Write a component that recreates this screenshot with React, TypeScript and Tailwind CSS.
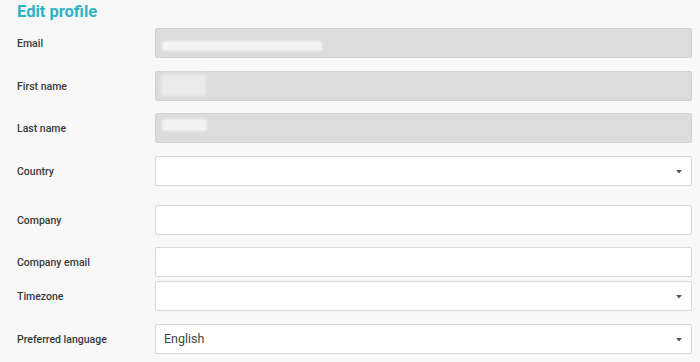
import React from "react";

const font = { fontFamily: "Roboto, 'Liberation Sans', sans-serif" };

function Caret() {
  return (
    <svg width="6" height="4" viewBox="0 0 6 4" className="absolute right-[9px] top-[13px]">
      <path d="M0 0 L6 0 L3 3.5 Z" fill="#555" />
    </svg>
  );
}

function Row({
  label,
  mt,
  kind,
  value,
  blur,
}: {
  label: string;
  mt: string;
  kind: "disabled" | "input" | "select";
  value?: string;
  blur?: React.ReactNode;
}) {
  return (
    <div className={`flex items-center ${mt}`}>
      <div className="w-[138px] pt-[1px] text-[10.5px] font-medium text-[#3a3a3a]">{label}</div>
      <div
        className={
          kind === "disabled"
            ? "relative flex-1 h-[30px] rounded-[2px] border border-[#d2d2d2] bg-[#dcdcdc]"
            : "relative flex-1 h-[30px] rounded-[2px] border border-[#d8d8d8] bg-white"
        }
      >
        {blur}
        {value && (
          <span className="absolute left-[8px] top-[5px] text-[12.5px] text-[#444]">{value}</span>
        )}
        {kind === "select" && <Caret />}
      </div>
    </div>
  );
}

export default function App() {
  return (
    <div className="w-[700px] h-[362px] bg-[#f8f8f8] pl-[17px] pr-[8px] overflow-hidden" style={font}>
      <div className="h-[28px] pt-[1px] text-[16.5px] font-bold text-[#2bb4c6] leading-[22px]">Edit profile</div>
      <Row
        label="Email"
        mt="mt-0"
        kind="disabled"
        blur={<div className="absolute left-[6px] top-[12px] w-[160px] h-[10px] bg-[#f4f4f4] blur-[1px] rounded-[2px]" />}
      />
      <Row
        label="First name"
        mt="mt-[13px]"
        kind="disabled"
        blur={<div className="absolute left-[5px] top-[2px] w-[45px] h-[22px] bg-[#ebebeb] blur-[1.5px] rounded-[2px]" />}
      />
      <Row
        label="Last name"
        mt="mt-[12px]"
        kind="disabled"
        blur={<div className="absolute left-[6px] top-[5px] w-[45px] h-[12px] bg-[#f2f2f2] blur-[1px] rounded-[2px]" />}
      />
      <Row label="Country" mt="mt-[13px]" kind="select" />
      <Row label="Company" mt="mt-[19px]" kind="input" />
      <Row label="Company email" mt="mt-[12px]" kind="input" />
      <Row label="Timezone" mt="mt-[4px]" kind="select" />
      <Row label="Preferred language" mt="mt-[13px]" kind="select" value="English" />
    </div>
  );
}
